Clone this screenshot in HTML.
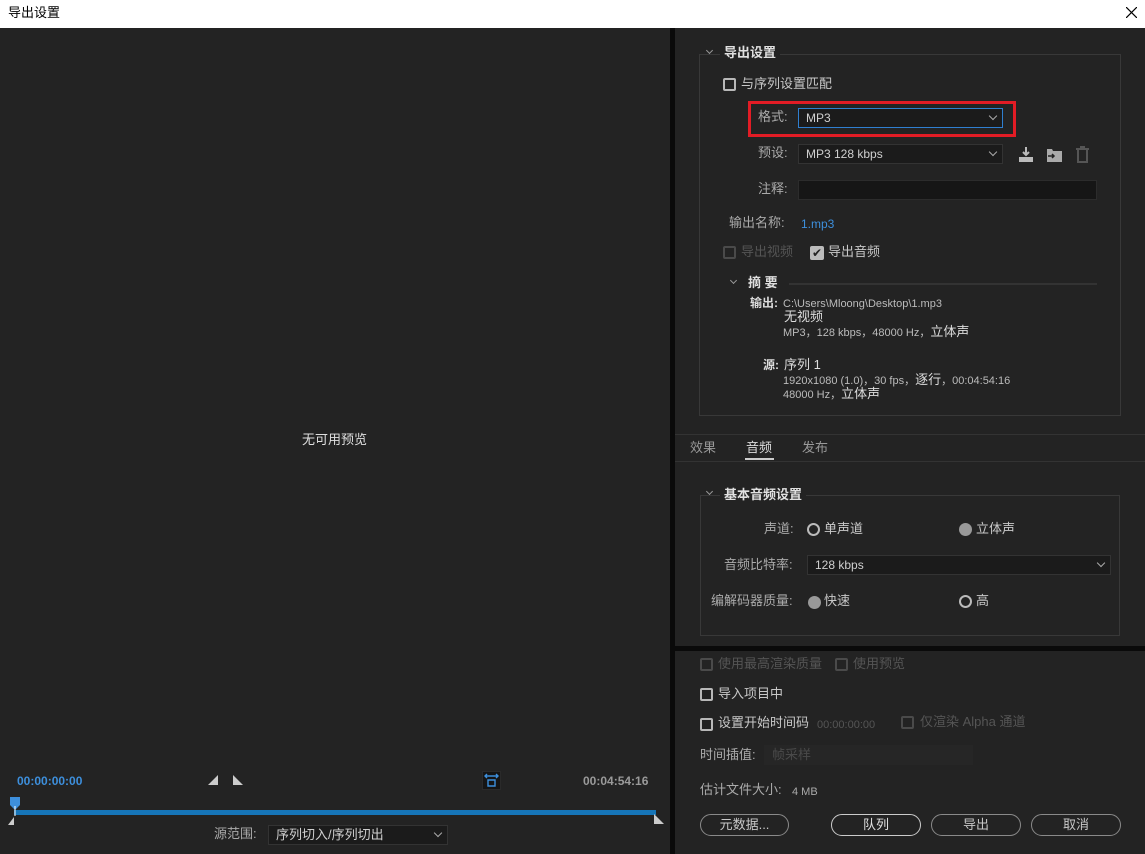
<!DOCTYPE html>
<html><head><meta charset="utf-8"><style>
*{margin:0;padding:0;box-sizing:border-box}
body{width:1145px;height:854px;background:#232323;font-family:"Liberation Sans","Noto Sans CJK SC",sans-serif;font-size:13px;color:#c8c8c8;position:relative;overflow:hidden}
.a{position:absolute;white-space:nowrap;line-height:16px}
.cb{position:absolute;width:13px;height:13px;border:2px solid #b8b8b8;border-radius:2px}
.cb.d{border-color:#4a4a4a}
.dd{position:absolute;height:20px;background:#1b1b1b;border:1px solid #333;font-size:12px;padding:1px 7px;line-height:16px;color:#d0d0d0}
.chev{position:absolute;right:6px;top:6px;width:6px;height:6px;border-right:1px solid #aaa;border-bottom:1px solid #aaa;transform:rotate(45deg);margin-top:-2px}
.btn{position:absolute;height:22px;border:1px solid #8a8a8a;border-radius:11px;text-align:center;font-size:13px;line-height:20px;color:#c8c8c8}
.rad{position:absolute;width:13px;height:13px;border-radius:50%}
.box{position:absolute;border:1px solid #383838}
.sc{position:absolute;width:5px;height:5px;border-right:1px solid #999;border-bottom:1px solid #999;transform:rotate(45deg)}
</style></head><body>
<div class="a" style="left:0;top:0;width:1145px;height:28px;background:#fff"></div>
<div class="a" style="left:8px;top:5px;color:#000;font-size:13px">导出设置</div>
<svg class="a" style="left:1126px;top:7px" width="11" height="11"><path d="M0 0L11 11M11 0L0 11" stroke="#000" stroke-width="1.2"/></svg>
<div class="a" style="left:670px;top:28px;width:5px;height:826px;background:#0a0a0a"></div>
<!-- left -->
<div class="a" style="left:302px;top:432px;color:#e0e0e0">无可用预览</div>
<div class="a" style="left:17px;top:773px;color:#3d8fdc;font-size:12px;font-weight:bold">00:00:00:00</div>
<div class="a" style="left:583px;top:773px;color:#9a9a9a;font-size:12px;font-weight:bold">00:04:54:16</div>
<svg class="a" style="left:208px;top:775px" width="36" height="11"><polygon points="0,10 10,10 10,0" fill="#ccc"/><polygon points="25,0 25,10 35,10" fill="#ccc"/></svg>
<div class="a" style="left:482px;top:771px;width:19px;height:19px;background:#151515;border:1px solid #2a2a2a"></div>
<svg class="a" style="left:484px;top:773px" width="15" height="15"><path d="M1 3h13M3 1L1 3l2 2M12 1l2 2-2 2M4 7h7v6H4z" stroke="#3d8fdc" stroke-width="1.4" fill="none"/></svg>
<div class="a" style="left:14px;top:810px;width:642px;height:5px;background:#1675b8"></div>
<svg class="a" style="left:8px;top:796px" width="14" height="30"><path d="M2 1h10v8l-5 5-5-5z" fill="#3d8fdc"/><line x1="7" y1="10" x2="7" y2="20" stroke="#fff"/><polygon points="0,29 6,21 6,29" fill="#ccc"/></svg>
<svg class="a" style="left:654px;top:814px" width="12" height="12"><polygon points="0,0 10,10 0,10" fill="#ccc"/></svg>
<div class="a" style="left:214px;top:826px;color:#aaa">源范围:</div>
<div class="dd" style="left:268px;top:825px;width:180px;font-size:13px">序列切入/序列切出<span class="chev"></span></div>
<!-- right top -->
<div class="box" style="left:699px;top:54px;width:422px;height:362px"></div>
<div class="sc" style="left:707px;top:48px"></div>
<div class="a" style="left:720px;top:45px;background:#232323;padding:0 4px;font-weight:bold;color:#e0e0e0">导出设置</div>
<div class="cb" style="left:723px;top:78px"></div>
<div class="a" style="left:741px;top:76px">与序列设置匹配</div>
<div class="a" style="left:748px;top:101px;width:268px;height:36px;border:3px solid #e21c25"></div>
<div class="a" style="left:758px;top:109px;color:#aaa">格式:</div>
<div class="dd" style="left:798px;top:108px;width:205px;border-color:#2f7fd0">MP3<span class="chev"></span></div>
<div class="a" style="left:758px;top:145px;color:#aaa">预设:</div>
<div class="dd" style="left:798px;top:144px;width:205px">MP3 128 kbps<span class="chev"></span></div>
<svg class="a" style="left:1018px;top:146px" width="80" height="17"><path d="M8 1v8M5 6l3 3 3-3" stroke="#bbb" stroke-width="2" fill="none"/><rect x="1" y="11" width="14" height="5" fill="#bbb"/><path d="M29 3h5l1 2h9v11H29z" fill="#aaa"/><path d="M30 10h6M34 8l2 2-2 2" stroke="#222" stroke-width="1.5" fill="none"/><path d="M58 3h13M60 4v12h9V4M62 1h5" stroke="#555" stroke-width="2" fill="none"/></svg>
<div class="a" style="left:758px;top:181px;color:#aaa">注释:</div>
<div class="a" style="left:798px;top:180px;width:299px;height:20px;background:#161616;border:1px solid #2c2c2c"></div>
<div class="a" style="left:729px;top:215px;color:#aaa">输出名称:</div>
<div class="a" style="left:801px;top:216px;color:#3d8fdc;font-size:12px">1.mp3</div>
<div class="cb d" style="left:723px;top:246px"></div>
<div class="a" style="left:741px;top:244px;color:#555">导出视频</div>
<div class="a" style="left:810px;top:246px;width:14px;height:14px;background:#bbb;border-radius:2px;color:#222;font-size:12px;line-height:14px;text-align:center">✔</div>
<div class="a" style="left:828px;top:244px">导出音频</div>
<div class="sc" style="left:731px;top:278px"></div>
<div class="a" style="left:748px;top:275px;font-weight:bold;color:#ddd">摘 要</div>
<div class="a" style="left:789px;top:283px;width:308px;height:2px;background:#333"></div>
<div class="a" style="left:750px;top:295px;font-weight:bold;font-size:12px;color:#ddd">输出:</div>
<div class="a" style="left:783px;top:296px;font-size:11px;color:#bbb">C:\Users\Mloong\Desktop\1.mp3</div>
<div class="a" style="left:784px;top:309px;color:#ddd">无视频</div>
<div class="a" style="left:783px;top:324px;font-size:11px;color:#bbb">MP3，128 kbps，48000 Hz，<span style="font-size:13px;color:#ddd">立体声</span></div>
<div class="a" style="left:763px;top:357px;font-weight:bold;font-size:12px;color:#ddd">源:</div>
<div class="a" style="left:784px;top:357px;color:#ddd">序列 1</div>
<div class="a" style="left:783px;top:372px;font-size:11px;color:#bbb">1920x1080 (1.0)，30 fps，<span style="font-size:13px;color:#ddd">逐行</span>，00:04:54:16</div>
<div class="a" style="left:783px;top:386px;font-size:11px;color:#bbb">48000 Hz，<span style="font-size:13px;color:#ddd">立体声</span></div>
<!-- tabs -->
<div class="a" style="left:675px;top:434px;width:470px;height:1px;background:#333"></div>
<div class="a" style="left:675px;top:461px;width:470px;height:1px;background:#333"></div>
<div class="a" style="left:690px;top:440px;color:#999">效果</div>
<div class="a" style="left:746px;top:440px;color:#ddd">音频</div>
<div class="a" style="left:745px;top:458px;width:29px;height:2px;background:#ccc"></div>
<div class="a" style="left:802px;top:440px;color:#999">发布</div>
<!-- audio -->
<div class="box" style="left:700px;top:495px;width:420px;height:141px"></div>
<div class="sc" style="left:707px;top:489px"></div>
<div class="a" style="left:720px;top:487px;background:#232323;padding:0 4px;font-weight:bold;color:#e0e0e0">基本音频设置</div>
<div class="a" style="left:764px;top:521px;color:#aaa">声道:</div>
<div class="rad" style="left:807px;top:523px;border:2px solid #bbb"></div>
<div class="a" style="left:824px;top:521px">单声道</div>
<div class="rad" style="left:959px;top:523px;background:#999"></div>
<div class="a" style="left:976px;top:521px">立体声</div>
<div class="a" style="left:724px;top:557px;color:#aaa">音频比特率:</div>
<div class="dd" style="left:807px;top:555px;width:304px">128 kbps<span class="chev"></span></div>
<div class="a" style="left:711px;top:593px;color:#aaa">编解码器质量:</div>
<div class="rad" style="left:808px;top:596px;background:#999"></div>
<div class="a" style="left:824px;top:593px">快速</div>
<div class="rad" style="left:959px;top:595px;border:2px solid #bbb"></div>
<div class="a" style="left:976px;top:593px">高</div>
<!-- bottom -->
<div class="a" style="left:675px;top:646px;width:470px;height:5px;background:#0a0a0a"></div>
<div class="cb d" style="left:700px;top:658px"></div>
<div class="a" style="left:718px;top:656px;color:#555">使用最高渲染质量</div>
<div class="cb d" style="left:835px;top:658px"></div>
<div class="a" style="left:853px;top:656px;color:#555">使用预览</div>
<div class="cb" style="left:700px;top:688px"></div>
<div class="a" style="left:718px;top:686px">导入项目中</div>
<div class="cb" style="left:700px;top:718px"></div>
<div class="a" style="left:718px;top:715px">设置开始时间码</div>
<div class="a" style="left:817px;top:717px;color:#555;font-size:11px">00:00:00:00</div>
<div class="cb d" style="left:901px;top:716px"></div>
<div class="a" style="left:920px;top:714px;color:#555">仅渲染 Alpha 通道</div>
<div class="a" style="left:700px;top:747px;color:#aaa">时间插值:</div>
<div class="a" style="left:764px;top:745px;width:209px;height:20px;background:#262626;color:#4a4a4a;padding:2px 8px">帧采样</div>
<div class="a" style="left:700px;top:782px;color:#aaa">估计文件大小:</div>
<div class="a" style="left:792px;top:784px;font-size:11px;color:#aaa">4 MB</div>
<div class="btn" style="left:700px;top:814px;width:89px">元数据...</div>
<div class="btn" style="left:831px;top:814px;width:90px;border-color:#ccc;color:#e0e0e0">队列</div>
<div class="btn" style="left:931px;top:814px;width:90px">导出</div>
<div class="btn" style="left:1031px;top:814px;width:90px">取消</div>
</body></html>
